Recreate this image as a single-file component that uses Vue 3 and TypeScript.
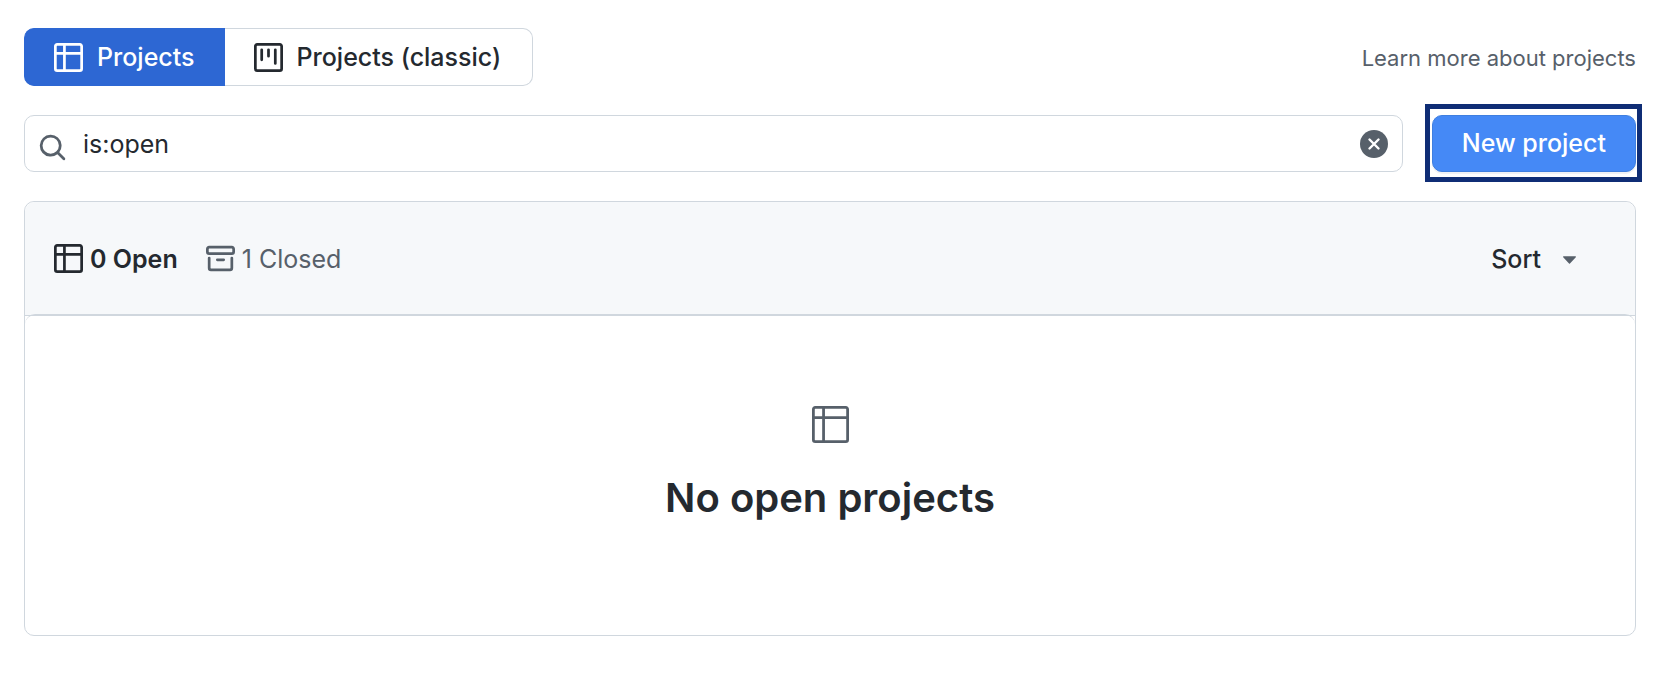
<script setup lang="ts">
import { ref } from 'vue'

const query = ref('is:open')

const tablePath =
  'M0 1.75C0 .784.784 0 1.75 0h12.5C15.216 0 16 .784 16 1.75v12.5A1.75 1.75 0 0 1 14.25 16H1.75A1.75 1.75 0 0 1 0 14.25ZM6.5 6.5v8h7.75a.25.25 0 0 0 .25-.25V6.5Zm8-1.5V1.75a.25.25 0 0 0-.25-.25H6.5V5Zm-13 1.5v7.75c0 .138.112.25.25.25H5v-8ZM5 5V1.5H1.75a.25.25 0 0 0-.25.25V5Z'
</script>

<template>
  <main class="page">
    <header class="top">
      <nav class="tabs" aria-label="Project types">
        <a href="#projects" class="tab selected" aria-current="page">
          <svg class="icon" viewBox="0 0 16 16" aria-hidden="true"><path :d="tablePath" /></svg>
          <span>Projects</span>
        </a>
        <a href="#classic" class="tab">
          <svg class="icon" viewBox="0 0 16 16" aria-hidden="true">
            <path fill-rule="evenodd" d="M1.75 0h12.5C15.216 0 16 .784 16 1.75v12.5A1.75 1.75 0 0 1 14.25 16H1.75A1.75 1.75 0 0 1 0 14.25V1.75C0 .784.784 0 1.75 0ZM1.5 1.75v12.5c0 .138.112.25.25.25h12.5a.25.25 0 0 0 .25-.25V1.75a.25.25 0 0 0-.25-.25H1.75a.25.25 0 0 0-.25.25ZM11.75 3a.75.75 0 0 1 .75.75v7.5a.75.75 0 0 1-1.5 0v-7.5a.75.75 0 0 1 .75-.75Zm-8.25.75a.75.75 0 0 1 1.5 0v5.5a.75.75 0 0 1-1.5 0ZM8 3a.75.75 0 0 1 .75.75v3.5a.75.75 0 0 1-1.5 0v-3.5A.75.75 0 0 1 8 3Z" />
          </svg>
          <span>Projects (classic)</span>
        </a>
      </nav>
      <a href="#learn" class="learn">Learn more about projects</a>
    </header>

    <form class="filters" role="search" @submit.prevent>
      <div class="search">
        <svg class="search-icon" viewBox="0 0 16 16" aria-hidden="true">
          <path d="M10.68 11.74a6 6 0 0 1-7.922-8.982 6 6 0 0 1 8.982 7.922l3.04 3.04a.749.749 0 0 1-.326 1.275.749.749 0 0 1-.734-.215ZM11.5 7a4.499 4.499 0 1 0-8.997 0A4.499 4.499 0 0 0 11.5 7Z" />
        </svg>
        <input v-model="query" type="text" class="query" aria-label="Search all projects" />
        <button type="button" class="clear" aria-label="Clear filter" @click="query = ''">
          <svg viewBox="0 0 28 28" aria-hidden="true">
            <circle cx="14" cy="14" r="14" />
            <path class="cross" d="M9.5 9.5l9 9M18.5 9.5l-9 9" />
          </svg>
        </button>
      </div>
      <div class="highlight">
        <button type="button" class="create">New project</button>
      </div>
    </form>

    <section class="box">
      <div class="box-header">
        <a href="#open" class="state current">
          <svg class="icon" viewBox="0 0 16 16" aria-hidden="true"><path :d="tablePath" /></svg>
          <span>0 Open</span>
        </a>
        <a href="#closed" class="state">
          <svg class="icon" viewBox="0 0 16 16" aria-hidden="true">
            <path d="M0 2.75C0 1.784.784 1 1.75 1h12.5c.966 0 1.75.784 1.75 1.75v1.5A1.75 1.75 0 0 1 14.25 6H1.75A1.75 1.75 0 0 1 0 4.25ZM1.75 7a.75.75 0 0 1 .75.75v5.5c0 .138.112.25.25.25h10.5a.25.25 0 0 0 .25-.25v-5.5a.75.75 0 0 1 1.5 0v5.5A1.75 1.75 0 0 1 13.25 15H2.75A1.75 1.75 0 0 1 1 13.25v-5.5A.75.75 0 0 1 1.75 7Zm0-4.5a.25.25 0 0 0-.25.25v1.5c0 .138.112.25.25.25h12.5a.25.25 0 0 0 .25-.25v-1.5a.25.25 0 0 0-.25-.25ZM6.25 8h3.5a.75.75 0 0 1 0 1.5h-3.5a.75.75 0 0 1 0-1.5Z" />
          </svg>
          <span>1 Closed</span>
        </a>
        <button type="button" class="sort" aria-haspopup="menu">
          <span>Sort</span>
          <svg class="caret" viewBox="0 0 14 8" aria-hidden="true"><path d="M.6 0h12.8c.5 0 .8.6.4 1L7.5 7.7a.7.7 0 0 1-1 0L.2 1C-.2.6.1 0 .6 0Z" /></svg>
        </button>
      </div>
      <div class="blank">
        <svg class="blank-icon" viewBox="0 0 20 20" aria-hidden="true">
          <path fill-rule="evenodd" d="M1.75 0h16.5C19.216 0 20 .784 20 1.75v16.5A1.75 1.75 0 0 1 18.25 20H1.75A1.75 1.75 0 0 1 0 18.25V1.75C0 .784.784 0 1.75 0ZM1.5 1.75V5.5h4v-4H1.75a.25.25 0 0 0-.25.25ZM7 1.5v4h11.5V1.75a.25.25 0 0 0-.25-.25ZM1.5 7v11.25c0 .138.112.25.25.25H5.5V7ZM7 7v11.5h11.25a.25.25 0 0 0 .25-.25V7Z" />
        </svg>
        <h2>No open projects</h2>
      </div>
    </section>
  </main>
</template>

<style>
body {
  margin: 0;
  background: #ffffff;
}
</style>

<style scoped>
.page {
  padding: 28px 38px 56px 24px;
  font-family: Inter, 'Liberation Sans', sans-serif;
  font-size: 25px;
  line-height: 36px;
  color: #24292f;
}

.page * {
  box-sizing: border-box;
}

a {
  color: inherit;
  text-decoration: none;
}

button,
input {
  font: inherit;
  color: inherit;
}

svg {
  display: block;
  flex: none;
  fill: currentColor;
}

.top,
.tabs,
.tab,
.filters,
.search,
.box-header,
.state,
.sort {
  display: flex;
  align-items: center;
}

.top {
  justify-content: space-between;
}

.tab {
  gap: 14px;
  height: 58px;
  padding: 0 31px 0 29px;
  border: 1px solid #d0d7de;
  border-left: 0;
  border-radius: 0 10px 10px 0;
  font-weight: 500;
}

.tab.selected {
  padding: 0 30px 0 29px;
  border: 1px solid #2d67d3;
  border-right: 0;
  border-radius: 10px 0 0 10px;
  background: #2d67d3;
  color: #ffffff;
}

.icon {
  width: 29px;
  height: 29px;
}

.learn {
  padding-top: 2px;
  font-size: 22px;
  color: #57606a;
}

.filters {
  gap: 29px;
  margin-top: 29px;
}

.search {
  flex: 1;
  height: 57px;
  padding: 0 14px 0 13px;
  border: 1px solid #d0d7de;
  border-radius: 10px;
}

.search-icon {
  width: 29px;
  height: 29px;
  margin-top: 8px;
  color: #57606a;
}

.query {
  flex: 1;
  min-width: 0;
  padding: 0 0 0 16px;
  border: 0;
  outline: 0;
  background: transparent;
}

.clear {
  padding: 0;
  border: 0;
  background: none;
  color: #57606a;
}

.clear svg {
  width: 28px;
  height: 28px;
}

.cross {
  fill: none;
  stroke: #ffffff;
  stroke-width: 2.4;
  stroke-linecap: round;
}

.highlight {
  position: relative;
}

.highlight::after {
  content: '';
  position: absolute;
  inset: -11px -6px -10px -7px;
  border: 5px solid #0f2d75;
  pointer-events: none;
}

.create {
  display: block;
  height: 57px;
  padding: 0 29px 2px;
  border: 1px solid #3f7fe0;
  border-radius: 10px;
  background: #4589f6;
  box-shadow: 0 2px 0 #f1f2f4;
  font-weight: 500;
  color: #ffffff;
}

.box {
  margin-top: 29px;
  border: 1px solid #d0d7de;
  border-radius: 10px;
}

.box-header {
  gap: 28px;
  height: 114px;
  padding: 0 59px 0 29px;
  border-bottom: 1px solid #d0d7de;
  border-radius: 10px 10px 0 0;
  background: #f6f8fa;
}

.state {
  gap: 7px;
  color: #57606a;
}

.state.current {
  font-weight: 600;
  color: #24292f;
}

.sort {
  gap: 22px;
  margin-left: auto;
  padding: 0;
  border: 0;
  background: none;
  font-weight: 500;
}

.caret {
  width: 13px;
  height: 8px;
  margin-top: 2px;
  color: #57606a;
}

.blank {
  display: flex;
  flex-direction: column;
  align-items: center;
  gap: 24px;
  margin-top: -2px;
  padding: 91px 29px 106px;
  border-top: 1px solid #d0d7de;
  border-radius: 10px;
}

.blank-icon {
  width: 37px;
  height: 37px;
  color: #57606a;
}

h2 {
  margin: 0;
  font-size: 40px;
  line-height: 62px;
  font-weight: 600;
}
</style>
